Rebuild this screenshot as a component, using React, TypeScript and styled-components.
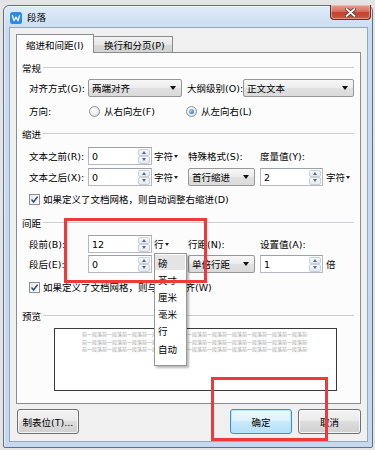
import React from 'react';
import styled, { createGlobalStyle, css } from 'styled-components';

const Global = createGlobalStyle`
  html, body { margin: 0; padding: 0; }
  body {
    background: #e4e4e4;
    font-family: "DejaVu Sans", "Noto Sans CJK SC", sans-serif;
    font-size: 9.5px;
    color: #000;
  }
`;

const Stage = styled.div`
  position: relative;
  width: 375px;
  height: 450px;
  overflow: hidden;
  box-sizing: border-box;
  padding: 5px 3px 0 3px;
`;

const Window = styled.div`
  width: 370px;
  height: 443px;
  box-sizing: border-box;
  border: 1px solid #5f7186;
  border-radius: 6px 6px 2px 2px;
  background: linear-gradient(#dfebf8, #c9dcf1 24px, #c4d8ef);
  padding: 0 4px 5px 5px;
  display: flex;
  flex-direction: column;
  box-shadow: inset 0 1px 0 #f2f7fc, inset 1px 0 0 #e6eef8;
`;

const TitleBar = styled.div`
  height: 21px;
  display: flex;
  align-items: flex-start;
  padding-left: 1px;
`;

const TitleIcon = styled.svg`
  margin-top: 6px;
  flex: none;
`;

const TitleText = styled.div`
  margin-top: 5px;
  margin-left: 5px;
  line-height: 13px;
  font-family: "Noto Sans CJK SC", sans-serif;
  font-size: 9.5px;
`;

const CloseBtn = styled.div`
  margin-left: auto;
  margin-top: -1px;
  margin-right: -3px;
  width: 41px;
  height: 15px;
  box-sizing: border-box;
  border: 1px solid #6b2a22;
  border-top: none;
  border-radius: 0 0 4px 4px;
  background: linear-gradient(#e8a093, #d7705f 45%, #c3402d 55%, #d15a3e);
  display: flex;
  align-items: center;
  justify-content: center;
  box-shadow: inset 0 0 0 1px rgba(255, 220, 210, 0.45);
`;

const Client = styled.div`
  width: 359px;
  height: 415px;
  box-sizing: border-box;
  border: 1px solid #97a7ba;
  background: #f0f0f0;
  padding: 6px 6px 0 6px;
  display: flex;
  flex-direction: column;
`;

const TabStrip = styled.div`
  height: 18px;
  display: flex;
  align-items: flex-end;
`;

const Tab = styled.div<{ $active?: boolean; $w: number }>`
  width: ${(p) => p.$w}px;
  box-sizing: border-box;
  border: 1px solid #898c95;
  display: flex;
  align-items: center;
  padding-left: 9px;
  white-space: nowrap;
  ${(p) =>
    p.$active
      ? css`
          height: 19px;
          margin-bottom: -1px;
          border-bottom: none;
          background: #fcfcfc;
          position: relative;
          z-index: 1;
          padding-top: 1px;
        `
      : css`
          height: 16px;
          margin-left: -1px;
          border-bottom: none;
          background: linear-gradient(#f3f3f3, #e6e6e6 50%, #d9d9d9 51%, #d3d3d3);
          padding-left: 10px;
        `}
`;

const Panel = styled.div`
  height: 352px;
  box-sizing: border-box;
  border: 1px solid #898c95;
  background: #fcfcfc;
  padding: 0 6px 0 5px;
  display: flex;
  flex-direction: column;
`;

const Section = styled.div<{ $mt: number }>`
  display: flex;
  align-items: center;
  height: 14px;
  margin-top: ${(p) => p.$mt}px;
  white-space: nowrap;
  &::after {
    content: '';
    flex: 1;
    height: 0;
    border-top: 1px solid #c9cdd2;
    border-bottom: 1px solid #ffffff;
    margin-left: 2px;
  }
`;

const FlexRow = styled.div<{ $mt: number; $h: number }>`
  display: flex;
  align-items: center;
  height: ${(p) => p.$h}px;
  margin-top: ${(p) => p.$mt}px;
  margin-left: 7px;
  white-space: nowrap;
`;

const GridRow = styled.div<{ $mt: number }>`
  display: grid;
  grid-template-columns: 59px 66px 34px 72px 66px auto;
  align-items: center;
  height: 18px;
  margin-top: ${(p) => p.$mt}px;
  margin-left: 7px;
  white-space: nowrap;
`;

const Label = styled.span<{ $w?: number; $ml?: number }>`
  display: inline-block;
  ${(p) => (p.$w ? `width: ${p.$w}px;` : '')}
  ${(p) => (p.$ml ? `margin-left: ${p.$ml}px;` : '')}
  flex: none;
  white-space: nowrap;
`;

const Select = styled.div<{ $w: number; $ml?: number }>`
  width: ${(p) => p.$w}px;
  height: ${(p) => 18}px;
  box-sizing: border-box;
  border: 1px solid #979797;
  border-radius: 2px;
  background: linear-gradient(#f7f7f7, #ececec 50%, #e1e1e1 51%, #dadada);
  display: flex;
  align-items: center;
  padding-left: 3px;
  flex: none;
  ${(p) => (p.$ml ? `margin-left: ${p.$ml}px;` : '')}
`;

const Arrow = styled.span`
  margin-left: auto;
  margin-right: 5px;
  width: 0;
  height: 0;
  border-left: 3.5px solid transparent;
  border-right: 3.5px solid transparent;
  border-top: 4px solid #111;
`;

const Spin = styled.div<{ $w: number }>`
  width: ${(p) => p.$w}px;
  height: 18px;
  box-sizing: border-box;
  border: 1px solid #b5b8bf;
  border-top-color: #9ca1a9;
  background: #fff;
  display: flex;
  align-items: center;
  padding-left: 3px;
`;

const SpinBtns = styled.div`
  margin-left: auto;
  margin-right: 1px;
  width: 12px;
  height: 15px;
  display: flex;
  flex-direction: column;
`;

const SpinBtn = styled.div<{ $up?: boolean }>`
  flex: 1;
  box-sizing: border-box;
  border: 1px solid #c9d0d8;
  border-radius: 2px;
  background: linear-gradient(#f8fafc, #e4e9ef);
  display: flex;
  align-items: center;
  justify-content: center;
  &::before {
    content: '';
    border-left: 2.5px solid transparent;
    border-right: 2.5px solid transparent;
    ${(p) => (p.$up ? 'border-bottom: 3px solid #51698a;' : 'border-top: 3px solid #51698a;')}
  }
`;

const Unit = styled.span`
  display: inline-flex;
  align-items: center;
  gap: 1px;
  &::after {
    content: '';
    border-left: 2.5px solid transparent;
    border-right: 2.5px solid transparent;
    border-top: 3px solid #222;
  }
`;

const RadioItem = styled.span<{ $w: number }>`
  display: inline-flex;
  align-items: center;
  width: ${(p) => p.$w}px;
  flex: none;
`;

const Radio = styled.span<{ $on?: boolean }>`
  width: 11px;
  height: 11px;
  margin-left: 1px;
  margin-right: 4px;
  border-radius: 50%;
  box-sizing: border-box;
  border: 1px solid #8d8f91;
  background: radial-gradient(circle at 40% 35%, #ffffff, #dcdcdc);
  position: relative;
  ${(p) =>
    p.$on &&
    css`
      &::after {
        content: '';
        position: absolute;
        inset: 2px;
        border-radius: 50%;
        background: radial-gradient(circle at 35% 35%, #9ad6ff, #1f5fae);
      }
    `}
`;

const CheckRow = styled.div<{ $mt: number }>`
  display: flex;
  align-items: center;
  height: 14px;
  margin-top: ${(p) => p.$mt}px;
  margin-left: 7px;
  white-space: nowrap;
  gap: 3px;
`;

const CheckBox = styled.span`
  width: 11px;
  height: 11px;
  box-sizing: border-box;
  border: 1px solid #8d8f91;
  background: linear-gradient(135deg, #e8e8e8, #fdfdfd);
  display: inline-flex;
  align-items: center;
  justify-content: center;
`;

const PreviewBox = styled.div`
  margin-top: 5px;
  margin-left: 32px;
  width: 283px;
  height: 63px;
  box-sizing: border-box;
  border: 1px solid #3a3a3a;
  background: #fff;
  padding: 1px 0 0 27px;
`;

const PreviewLine = styled.div`
  width: 226px;
  overflow: hidden;
  white-space: nowrap;
  font-family: "Noto Sans CJK SC", sans-serif;
  font-size: 5px;
  line-height: 7.5px;
  color: #a2a2a2;
`;

const ButtonRow = styled.div`
  margin-top: 5px;
  margin-left: 1px;
  display: flex;
  align-items: center;
  gap: 6px;
`;

const Button = styled.div<{ $w: number; $primary?: boolean; $push?: boolean }>`
  width: ${(p) => p.$w}px;
  height: 25px;
  box-sizing: border-box;
  border: 1px solid #707070;
  border-radius: 3px;
  background: linear-gradient(#f3f3f3, #ebebeb 45%, #dddddd 50%, #d0d0d0);
  box-shadow: inset 0 0 0 1px rgba(255, 255, 255, 0.75);
  display: flex;
  align-items: center;
  justify-content: center;
  white-space: nowrap;
  ${(p) => (p.$push ? 'margin-left: auto;' : '')}
  ${(p) =>
    p.$primary &&
    css`
      border-color: #3c8fd0;
      background: linear-gradient(#eef8fe, #dff2fd 45%, #c9eafc 50%, #b5e0f7);
      box-shadow: inset 0 0 0 1px rgba(180, 230, 255, 0.9);
    `}
`;

const Menu = styled.div`
  position: absolute;
  left: 154px;
  top: 253px;
  width: 33px;
  height: 113px;
  box-sizing: border-box;
  border: 1px solid #979797;
  background: #fff;
  box-shadow: 2px 2px 2px rgba(0, 0, 0, 0.28);
  display: flex;
  flex-direction: column;
  font-family: "Noto Sans CJK SC", sans-serif;
  z-index: 5;
`;

const MenuItem = styled.div<{ $hot?: boolean }>`
  height: 17.2px;
  display: flex;
  align-items: center;
  padding-left: 3px;
  white-space: nowrap;
  ${(p) =>
    p.$hot &&
    css`
      background: #e4e4e4;
      margin: 1px 1px 0 0;
      height: 15.2px;
      padding-left: 3px;
      margin-bottom: 1px;
    `}
`;

const RedBox = styled.div<{ $l: number; $t: number; $w: number; $h: number }>`
  position: absolute;
  left: ${(p) => p.$l}px;
  top: ${(p) => p.$t}px;
  width: ${(p) => p.$w}px;
  height: ${(p) => p.$h}px;
  box-sizing: border-box;
  border: 3px solid #ef3a3a;
  z-index: 10;
  pointer-events: none;
`;

const previewText = '前一段落'.repeat(12);

export default function App() {
  return (
    <>
      <Global />
      <Stage>
        <Window>
          <TitleBar>
            <TitleIcon width="12" height="12" viewBox="0 0 12 12">
              <rect width="12" height="12" rx="2.5" fill="#2d8be6" />
              <path d="M2.4 3.6 L4 8.6 L6 5.2 L8 8.6 L9.6 3.6" stroke="#fff" strokeWidth="1.3" fill="none" strokeLinejoin="round" strokeLinecap="round" />
            </TitleIcon>
            <TitleText>段落</TitleText>
            <CloseBtn>
              <svg width="11" height="9" viewBox="0 0 11 9">
                <path d="M1.5 1 L9.5 8 M9.5 1 L1.5 8" stroke="#4a2a26" strokeWidth="3.4" strokeLinecap="round" />
                <path d="M1.5 1 L9.5 8 M9.5 1 L1.5 8" stroke="#ffffff" strokeWidth="1.8" strokeLinecap="round" />
              </svg>
            </CloseBtn>
          </TitleBar>
          <Client>
            <TabStrip>
              <Tab $active $w={78}>缩进和间距(I)</Tab>
              <Tab $w={80}>换行和分页(P)</Tab>
            </TabStrip>
            <Panel>
              <Section $mt={8}>常规</Section>
              <FlexRow $mt={3} $h={19}>
                <Label $w={59}>对齐方式(G):</Label>
                <Select $w={94}>
                  两端对齐
                  <Arrow />
                </Select>
                <Label $w={56} $ml={5}>大纲级别(O):</Label>
                <Select $w={111}>
                  正文文本
                  <Arrow />
                </Select>
              </FlexRow>
              <FlexRow $mt={6} $h={16}>
                <Label $w={59}>方向:</Label>
                <RadioItem $w={97}>
                  <Radio />
                  从右向左(F)
                </RadioItem>
                <RadioItem $w={100}>
                  <Radio $on />
                  从左向右(L)
                </RadioItem>
              </FlexRow>

              <Section $mt={8}>缩进</Section>
              <GridRow $mt={6}>
                <Label>文本之前(R):</Label>
                <Spin $w={64}>
                  0
                  <SpinBtns>
                    <SpinBtn $up />
                    <SpinBtn />
                  </SpinBtns>
                </Spin>
                <Unit>字符</Unit>
                <Label>特殊格式(S):</Label>
                <Label>度量值(Y):</Label>
              </GridRow>
              <GridRow $mt={3}>
                <Label>文本之后(X):</Label>
                <Spin $w={64}>
                  0
                  <SpinBtns>
                    <SpinBtn $up />
                    <SpinBtn />
                  </SpinBtns>
                </Spin>
                <Unit>字符</Unit>
                <Select $w={67}>
                  首行缩进
                  <Arrow />
                </Select>
                <Spin $w={63}>
                  2
                  <SpinBtns>
                    <SpinBtn $up />
                    <SpinBtn />
                  </SpinBtns>
                </Spin>
                <Unit>字符</Unit>
              </GridRow>
              <CheckRow $mt={6}>
                <CheckBox>
                  <svg width="9" height="9" viewBox="0 0 9 9">
                    <path d="M1.5 4.6 L3.6 7 L7.6 1.6" stroke="#2b4a7c" strokeWidth="1.5" fill="none" />
                  </svg>
                </CheckBox>
                如果定义了文档网格，则自动调整右缩进(D)
              </CheckRow>

              <Section $mt={10}>间距</Section>
              <GridRow $mt={5}>
                <Label>段前(B):</Label>
                <Spin $w={64}>
                  12
                  <SpinBtns>
                    <SpinBtn $up />
                    <SpinBtn />
                  </SpinBtns>
                </Spin>
                <Unit>行</Unit>
                <Label>行距(N):</Label>
                <Label>设置值(A):</Label>
              </GridRow>
              <GridRow $mt={2}>
                <Label>段后(E):</Label>
                <Spin $w={64}>
                  0
                  <SpinBtns>
                    <SpinBtn $up />
                    <SpinBtn />
                  </SpinBtns>
                </Spin>
                <Unit>行</Unit>
                <Select $w={67}>
                  单倍行距
                  <Arrow />
                </Select>
                <Spin $w={63}>
                  1
                  <SpinBtns>
                    <SpinBtn $up />
                    <SpinBtn />
                  </SpinBtns>
                </Spin>
                <Label>倍</Label>
              </GridRow>
              <CheckRow $mt={7}>
                <CheckBox>
                  <svg width="9" height="9" viewBox="0 0 9 9">
                    <path d="M1.5 4.6 L3.6 7 L7.6 1.6" stroke="#2b4a7c" strokeWidth="1.5" fill="none" />
                  </svg>
                </CheckBox>
                如果定义了文档网格，则与网格对齐(W)
              </CheckRow>

              <Section $mt={15}>预览</Section>
              <PreviewBox>
                <PreviewLine>{previewText}</PreviewLine>
                <PreviewLine>{previewText}</PreviewLine>
                <PreviewLine>{previewText}</PreviewLine>
              </PreviewBox>
            </Panel>
            <ButtonRow>
              <Button $w={62}>制表位(T)...</Button>
              <Button $w={62} $primary $push>确定</Button>
              <Button $w={63}>取消</Button>
            </ButtonRow>
          </Client>
        </Window>

        <Menu>
          <MenuItem $hot>磅</MenuItem>
          <MenuItem>英寸</MenuItem>
          <MenuItem>厘米</MenuItem>
          <MenuItem>毫米</MenuItem>
          <MenuItem>行</MenuItem>
          <MenuItem>自动</MenuItem>
        </Menu>
        <RedBox $l={64} $t={218} $w={143} $h={65} />
        <RedBox $l={211} $t={377} $w={117} $h={64} />
      </Stage>
    </>
  );
}
